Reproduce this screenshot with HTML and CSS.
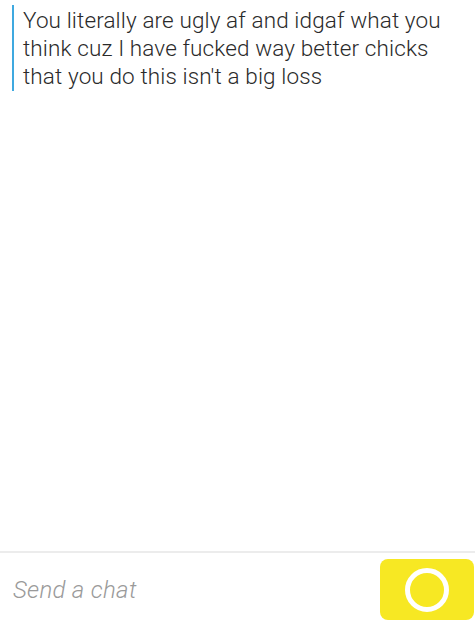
FILE: index.html
```html
<!DOCTYPE html>
<html lang="en">
<head>
    <meta charset="UTF-8">
    <meta name="viewport" content="width=device-width, initial-scale=1.0">
    <title>Chat</title>
    <link rel="stylesheet" href="styles.css">
</head>
<body>
    <div class="chat-box">
        <div class="message">
            <p>You literally are ugly af and idgaf what you think cuz I have fucked way better chicks that you do this isn't a big loss</p>
        </div>
    </div>
    <div class="input-area">
        <input type="text" class="chat-input" placeholder="Send a chat">
        <button class="snap-button"><span class="ring"></span></button>
    </div>
</body>
</html>
```

FILE: styles.css
```css
* {
    margin: 0;
    padding: 0;
    box-sizing: border-box;
}

body {
    background-color: white;
    font-family: Roboto, "Liberation Sans", sans-serif;
    font-weight: 300;
    width: 475px;
    height: 623px;
    display: flex;
    flex-direction: column;
    overflow: hidden;
}

.chat-box {
    flex-grow: 1;
    padding: 5px 0 0 12px;
}

.message {
    border-left: 2px solid #3fa9e0;
    padding: 0 0 0 9px;
}

.message p {
    color: #2a2a2a;
    font-size: 22.5px;
    letter-spacing: 0.12px;
    line-height: 28px;
    padding-top: 1px;
    padding-bottom: 1px;
    padding-right: 16px;
}

.input-area {
    height: 72px;
    border-top: 2px solid #ececec;
    display: flex;
    align-items: center;
    padding: 5px 1px 2px 13px;
}

.chat-input {
    flex-grow: 1;
    border: none;
    outline: none;
    background: transparent;
    font-family: Roboto, "Liberation Sans", sans-serif;
    font-weight: 300;
    font-style: italic;
    font-size: 24px;
    letter-spacing: 0.3px;
}

.chat-input::placeholder {
    color: #9a9a9a;
}

.snap-button {
    width: 94px;
    height: 61px;
    background-color: #f7e823;
    border: none;
    border-radius: 8px;
    display: flex;
    align-items: center;
    justify-content: center;
}

.ring {
    width: 44px;
    height: 44px;
    border: 5px solid white;
    border-radius: 50%;
}
```
